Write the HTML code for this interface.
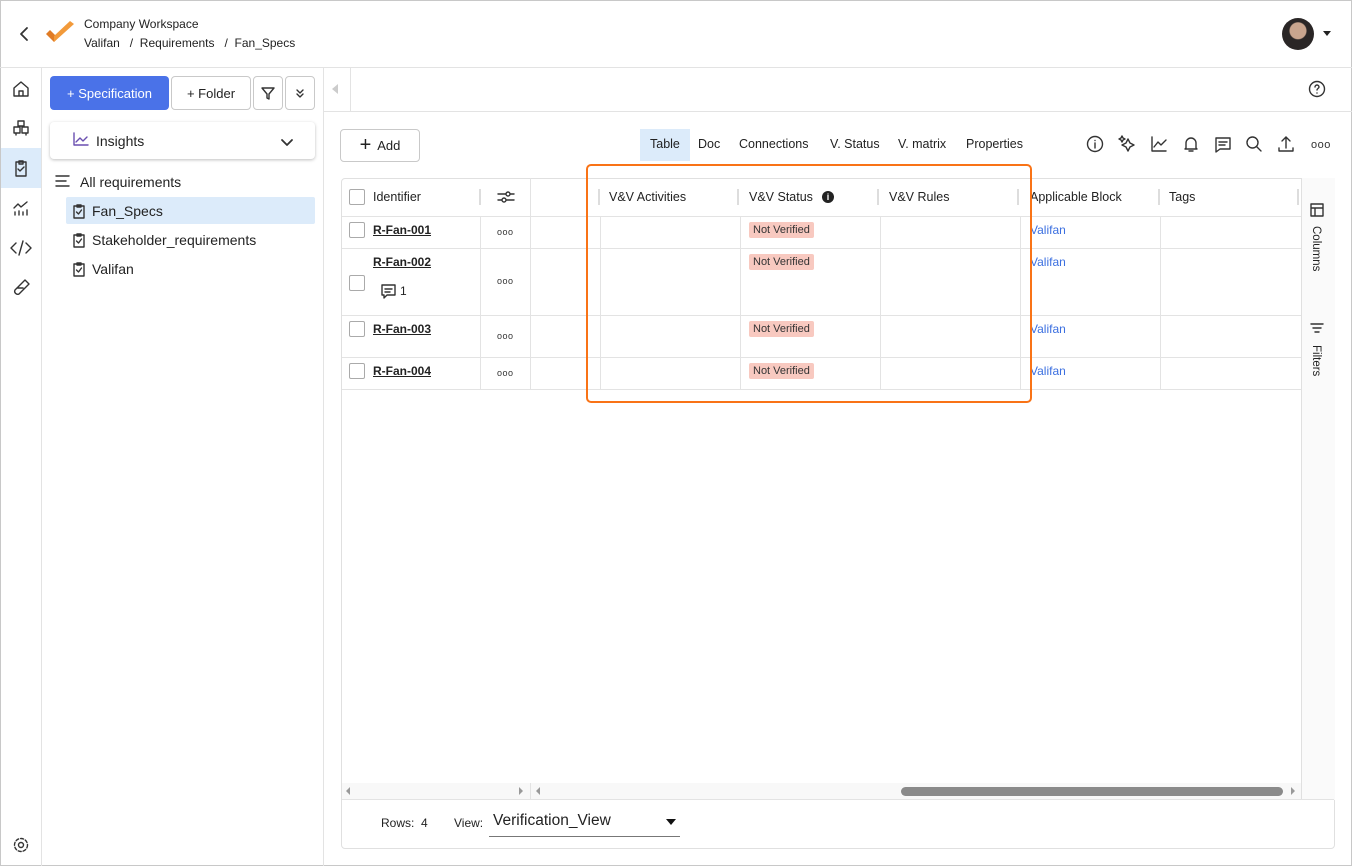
<!DOCTYPE html><html><head><style>
*{box-sizing:border-box;margin:0;padding:0}
body{width:1352px;height:866px;overflow:hidden;background:#fff;font-family:"Liberation Sans",sans-serif;color:#222;position:relative;font-size:13px}
.a{position:absolute}
.frame{left:0;top:0;width:1352px;height:866px;border:1px solid #c8c8c8}
.hl{background:#e3e3e3;height:1px}
.vl{background:#e3e3e3;width:1px}
.btn{border:1px solid #c9c9c9;border-radius:4px;background:#fff;display:flex;align-items:center;justify-content:center}
.cb{width:16px;height:16px;border:1px solid #aaa;border-radius:2px;background:#fff}
.th{font-size:12.5px;color:#222}
.id{font-weight:bold;text-decoration:underline;font-size:12px;color:#222}
.nv{background:#f8c9c0;color:#333;font-size:11px;padding:2px 4px;border-radius:2px}
.lk{color:#3b6fe0;font-size:12px}
.dots{font-size:9px;letter-spacing:0.5px;color:#333}
svg{stroke:#333;fill:none;stroke-width:1.4;stroke-linecap:round;stroke-linejoin:round}
</style></head><body>
<div class="a frame"></div>
<!-- header -->
<svg class="a" style="left:18px;top:26px" width="12" height="16"><path d="M9 2L3 8l6 6" stroke-width="1.8"/></svg>
<svg class="a" style="left:44px;top:20px" width="34" height="28"><path d="M2 14l8 8 4-4-8-8z" fill="#e07b24" stroke="none"/><path d="M10 22l20-18-4-3L10 16z" fill="#f29a3a" stroke="none"/></svg>
<div class="a" style="left:84px;top:17px;font-size:12px">Company Workspace</div>
<div class="a" style="left:84px;top:36px;font-size:12px">Valifan &nbsp;&nbsp;/&nbsp;&nbsp;Requirements &nbsp;&nbsp;/&nbsp;&nbsp;Fan_Specs</div>
<div class="a" style="left:1282px;top:18px;width:32px;height:32px;border-radius:50%;background:radial-gradient(circle at 50% 40%,#c9a58e 0 8px,#2a2626 9px)"></div>
<div class="a" style="left:1323px;top:31px;border:4px solid transparent;border-top:5px solid #222"></div>
<div class="a hl" style="left:0;top:67px;width:1352px"></div>
<!-- rail -->
<div class="a vl" style="left:41px;top:68px;height:798px"></div>
<div class="a" style="left:1px;top:148px;width:40px;height:40px;background:#dcebfa"></div>
<svg class="a" style="left:11px;top:79px" width="20" height="20"><path d="M3 9l7-6 7 6v8H3zM8 17v-5h4v5"/></svg>
<svg class="a" style="left:11px;top:118px" width="20" height="20"><path d="M7 3h6v5H7zM3 9h6v6H3zM11 9h6v6h-6zM5 15v2M15 15v2"/></svg>
<svg class="a" style="left:11px;top:158px" width="20" height="20"><path d="M5 4h10v14H5zM8 3h4v3H8zM7 11l2 2 4-4"/></svg>
<svg class="a" style="left:11px;top:198px" width="20" height="20"><path d="M3 10l4-4 3 3 6-5M4 17v-3M8 17v-4M12 17v-3M16 17v-5"/></svg>
<svg class="a" style="left:10px;top:238px" width="22" height="20"><path d="M6 5l-5 5 5 5M16 5l5 5-5 5M13 3l-4 14"/></svg>
<svg class="a" style="left:11px;top:278px" width="20" height="20"><path d="M14 2l4 4-10 10a3 3 0 01-4-4zM6 10h6"/></svg>
<svg class="a" style="left:12px;top:836px" width="18" height="18"><circle cx="9" cy="9" r="2.5"/><circle cx="9" cy="9" r="6.5" stroke-dasharray="3 2"/></svg>
<!-- sidebar -->
<div class="a vl" style="left:323px;top:68px;height:798px"></div>
<div class="a" style="left:50px;top:76px;width:119px;height:34px;background:#4a72e8;border-radius:4px;color:#fff;font-size:13px;display:flex;align-items:center;justify-content:center">+ Specification</div>
<div class="a btn" style="left:171px;top:76px;width:80px;height:34px;font-size:13px">+ Folder</div>
<div class="a btn" style="left:253px;top:76px;width:30px;height:34px"><svg width="14" height="14"><path d="M1 2h12L8 8v5l-2-1V8z"/></svg></div>
<div class="a btn" style="left:285px;top:76px;width:30px;height:34px"><svg width="12" height="12"><path d="M3 3l3 3 3-3M3 7l3 3 3-3"/></svg></div>
<div class="a" style="left:50px;top:122px;width:265px;height:37px;border-radius:4px;box-shadow:0 1px 3px rgba(0,0,0,.25);background:#fff"></div>
<svg class="a" style="left:73px;top:132px" width="16" height="14"><path d="M1 1v12h14M3 10l4-4 3 3 4-4" stroke="#6a4fb0"/></svg>
<div class="a" style="left:96px;top:133px;font-size:14px;font-weight:500">Insights</div>
<svg class="a" style="left:280px;top:138px" width="14" height="10"><path d="M2 2l5 5 5-5" stroke-width="1.8"/></svg>
<svg class="a" style="left:55px;top:174px" width="16" height="14"><path d="M1 2h13M1 7h10M1 12h13"/></svg>
<div class="a" style="left:80px;top:174px;font-size:14px">All requirements</div>
<div class="a" style="left:66px;top:197px;width:249px;height:27px;background:#dcebfa;border-radius:2px"></div>
<svg class="a" style="left:72px;top:203px" width="14" height="16"><path d="M2 3h10v12H2zM5 2h4v2H5zM4.5 9l2 2 3-4"/></svg>
<div class="a" style="left:92px;top:203px;font-size:14px">Fan_Specs</div>
<svg class="a" style="left:72px;top:232px" width="14" height="16"><path d="M2 3h10v12H2zM5 2h4v2H5zM4.5 9l2 2 3-4"/></svg>
<div class="a" style="left:92px;top:232px;font-size:14px">Stakeholder_requirements</div>
<svg class="a" style="left:72px;top:261px" width="14" height="16"><path d="M2 3h10v12H2zM5 2h4v2H5zM4.5 9l2 2 3-4"/></svg>
<div class="a" style="left:92px;top:261px;font-size:14px">Valifan</div>
<!-- main top -->
<div class="a" style="left:332px;top:84px;border:5px solid transparent;border-right:6px solid #ccc;border-left:0"></div>
<div class="a vl" style="left:350px;top:68px;height:43px"></div>
<div class="a hl" style="left:324px;top:111px;width:1028px"></div>
<svg class="a" style="left:1308px;top:80px" width="18" height="18"><circle cx="9" cy="9" r="7.5"/><path d="M7 7a2 2 0 114 0c0 1.5-2 1.5-2 3M9 13v.1"/></svg>
<div class="a btn" style="left:340px;top:129px;width:80px;height:33px;font-size:13px"><span style="font-size:20px;font-weight:300;margin-right:6px">+</span>Add</div>
<div class="a" style="left:640px;top:129px;width:50px;height:32px;background:#dcebfa"></div>
<div class="a" style="left:650px;top:137px;font-size:12.5px">Table</div>
<div class="a" style="left:698px;top:137px;font-size:12.5px">Doc</div>
<div class="a" style="left:739px;top:137px;font-size:12.5px">Connections</div>
<div class="a" style="left:830px;top:137px;font-size:12.5px">V. Status</div>
<div class="a" style="left:898px;top:137px;font-size:12.5px">V. matrix</div>
<div class="a" style="left:966px;top:137px;font-size:12.5px">Properties</div>
<svg class="a" style="left:1086px;top:135px" width="18" height="18"><circle cx="9" cy="9" r="7.5"/><path d="M9 8v5M9 5.5v.1"/></svg>
<svg class="a" style="left:1118px;top:135px" width="18" height="18"><path d="M10 4l2 4 4 2-4 2-2 4-2-4-4-2 4-2zM4 1l1 2 2 1-2 1-1 2-1-2-2-1 2-1z"/></svg>
<svg class="a" style="left:1150px;top:135px" width="18" height="18"><path d="M2 2v14h14M4 12l4-5 3 3 5-5"/></svg>
<svg class="a" style="left:1182px;top:135px" width="18" height="18"><path d="M4 13V8a5 5 0 0110 0v5l1 1H3zM7 16h4"/></svg>
<svg class="a" style="left:1214px;top:136px" width="18" height="18"><path d="M2 2h14v11H6l-4 3zM5 6h8M5 9h6"/></svg>
<svg class="a" style="left:1245px;top:135px" width="18" height="18"><circle cx="7.5" cy="7.5" r="5.5"/><path d="M11.5 11.5L16 16"/></svg>
<svg class="a" style="left:1277px;top:135px" width="18" height="18"><path d="M9 13V2M5 6l4-4 4 4M2 13v3h14v-3"/></svg>
<div class="a dots" style="left:1311px;top:139px;font-size:11px">ooo</div>
<!-- table card -->
<div class="a" style="left:341px;top:178px;width:994px;height:671px;border:1px solid #e0e0e0;border-radius:4px"></div>
<div class="a" style="left:1301px;top:178px;width:34px;height:622px;background:#fafafa;border-left:1px solid #e0e0e0"></div>
<svg class="a" style="left:1310px;top:203px" width="14" height="14"><path d="M1 1h12v12H1zM1 5h12M5 5v8"/></svg>
<div class="a" style="left:1310px;top:226px;writing-mode:vertical-rl;font-size:11.5px">Columns</div>
<svg class="a" style="left:1310px;top:322px" width="14" height="14"><path d="M1 2h12M3 6h8M5 10h4"/></svg>
<div class="a" style="left:1310px;top:345px;writing-mode:vertical-rl;font-size:11.5px">Filters</div>
<div class="a hl" style="left:342px;top:216px;width:959px"></div>
<div class="a hl" style="left:342px;top:248px;width:959px"></div>
<div class="a hl" style="left:342px;top:315px;width:959px"></div>
<div class="a hl" style="left:342px;top:357px;width:959px"></div>
<div class="a hl" style="left:342px;top:389px;width:959px"></div>
<div class="a vl" style="left:480px;top:216px;height:173px"></div>
<div class="a vl" style="left:530px;top:178px;height:211px"></div>
<div class="a vl" style="left:600px;top:216px;height:173px"></div>
<div class="a vl" style="left:740px;top:216px;height:173px"></div>
<div class="a vl" style="left:880px;top:216px;height:173px"></div>
<div class="a vl" style="left:1020px;top:216px;height:173px"></div>
<div class="a vl" style="left:1160px;top:216px;height:173px"></div>
<div class="a" style="left:479px;top:189px;width:2px;height:16px;background:#ddd"></div>
<div class="a" style="left:598px;top:189px;width:2px;height:16px;background:#ddd"></div>
<div class="a" style="left:737px;top:189px;width:2px;height:16px;background:#ddd"></div>
<div class="a" style="left:877px;top:189px;width:2px;height:16px;background:#ddd"></div>
<div class="a" style="left:1017px;top:189px;width:2px;height:16px;background:#ddd"></div>
<div class="a" style="left:1158px;top:189px;width:2px;height:16px;background:#ddd"></div>
<div class="a" style="left:1297px;top:189px;width:2px;height:16px;background:#ddd"></div>
<div class="a cb" style="left:349px;top:189px"></div>
<div class="a th" style="left:373px;top:190px">Identifier</div>
<svg class="a" style="left:497px;top:189px" width="18" height="16"><path d="M1 5h16M1 11h16"/><circle cx="11" cy="5" r="2" fill="#fff"/><circle cx="7" cy="11" r="2" fill="#fff"/></svg>
<div class="a th" style="left:609px;top:190px">V&amp;V Activities</div>
<div class="a th" style="left:749px;top:190px">V&amp;V Status</div>
<div class="a" style="left:822px;top:191px;width:12px;height:12px;border-radius:50%;background:#222;color:#fff;font-size:9px;font-weight:bold;text-align:center;line-height:12px">i</div>
<div class="a th" style="left:889px;top:190px">V&amp;V Rules</div>
<div class="a th" style="left:1030px;top:190px">Applicable Block</div>
<div class="a th" style="left:1169px;top:190px">Tags</div>
<!-- rows -->
<div class="a cb" style="left:349px;top:222px"></div><div class="a id" style="left:373px;top:223px">R-Fan-001</div>
<div class="a dots" style="left:497px;top:227px">ooo</div>
<div class="a nv" style="left:749px;top:222px">Not Verified</div><div class="a lk" style="left:1030px;top:223px">Valifan</div>
<div class="a cb" style="left:349px;top:275px"></div><div class="a id" style="left:373px;top:255px">R-Fan-002</div>
<svg class="a" style="left:380px;top:283px" width="18" height="18"><path d="M2 2h13v10H7l-3 3v-3H2zM5 6h7M5 9h5"/></svg><div class="a" style="left:400px;top:284px;font-size:12px">1</div>
<div class="a dots" style="left:497px;top:276px">ooo</div>
<div class="a nv" style="left:749px;top:254px">Not Verified</div><div class="a lk" style="left:1030px;top:255px">Valifan</div>
<div class="a cb" style="left:349px;top:321px"></div><div class="a id" style="left:373px;top:322px">R-Fan-003</div>
<div class="a dots" style="left:497px;top:331px">ooo</div>
<div class="a nv" style="left:749px;top:321px">Not Verified</div><div class="a lk" style="left:1030px;top:322px">Valifan</div>
<div class="a cb" style="left:349px;top:363px"></div><div class="a id" style="left:373px;top:364px">R-Fan-004</div>
<div class="a dots" style="left:497px;top:368px">ooo</div>
<div class="a nv" style="left:749px;top:363px">Not Verified</div><div class="a lk" style="left:1030px;top:364px">Valifan</div>
<!-- highlight -->
<div class="a" style="left:586px;top:164px;width:446px;height:239px;border:2px solid #f97316;border-radius:5px"></div>
<!-- scrollbar -->
<div class="a" style="left:342px;top:783px;width:959px;height:16px;background:#f8f8f8"></div>
<div class="a vl" style="left:530px;top:783px;height:16px"></div>
<div class="a hl" style="left:342px;top:799px;width:992px"></div>
<div class="a" style="left:346px;top:787px;border:4px solid transparent;border-right:4px solid #999;border-left:0"></div>
<div class="a" style="left:519px;top:787px;border:4px solid transparent;border-left:4px solid #999;border-right:0"></div>
<div class="a" style="left:536px;top:787px;border:4px solid transparent;border-right:4px solid #999;border-left:0"></div>
<div class="a" style="left:1291px;top:787px;border:4px solid transparent;border-left:4px solid #999;border-right:0"></div>
<div class="a" style="left:901px;top:787px;width:382px;height:9px;border-radius:5px;background:#8a8a8a"></div>
<!-- footer -->
<div class="a" style="left:381px;top:816px;font-size:12px">Rows:&nbsp; 4</div>
<div class="a" style="left:454px;top:816px;font-size:12px">View:</div>
<div class="a" style="left:493px;top:812px;font-size:15.5px">Verification_View</div>
<div class="a" style="left:666px;top:819px;border:5px solid transparent;border-top:6px solid #111"></div>
<div class="a" style="left:489px;top:836px;width:191px;height:1px;background:#777"></div>
</body></html>
